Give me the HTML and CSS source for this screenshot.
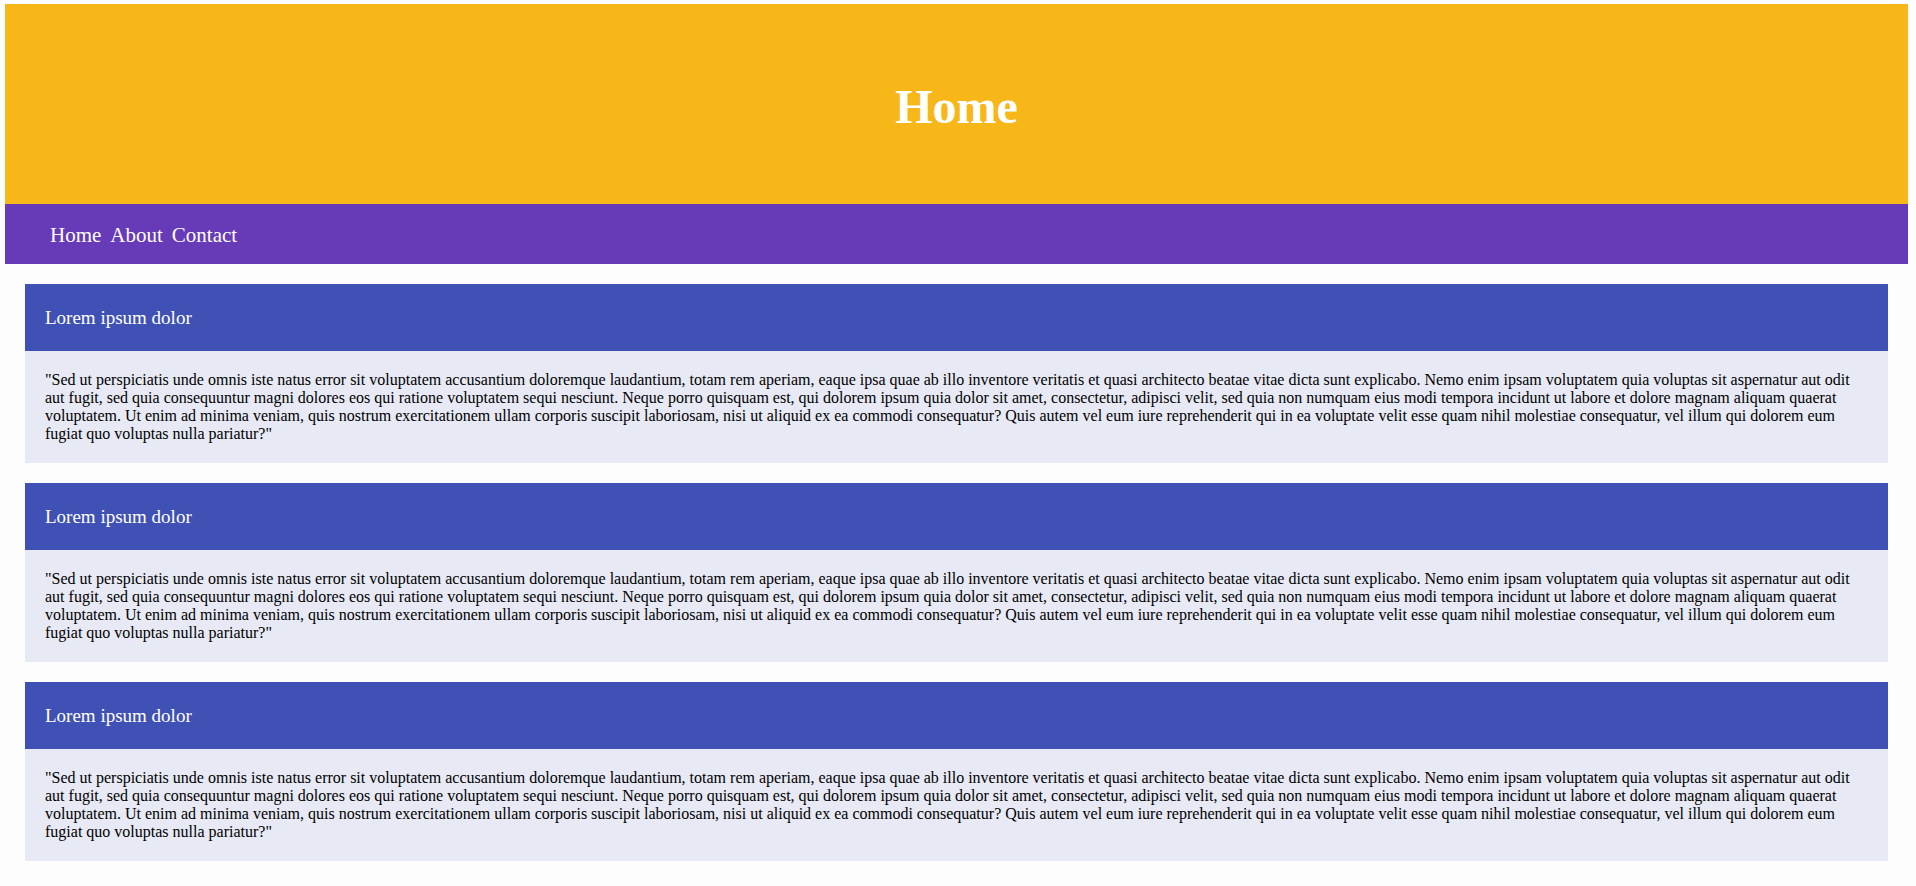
FILE: index.html
```html
<!DOCTYPE html>
<html lang="en">
<head>
<meta charset="utf-8">
<title>Home</title>
<link rel="stylesheet" href="styles.css">
</head>
<body>
<header class="hero">
  <h1 class="hero-title">Home</h1>
</header>
<nav class="nav">
  <a class="nav-link" href="#">Home</a>
  <a class="nav-link" href="#">About</a>
  <a class="nav-link" href="#">Contact</a>
</nav>
<main class="content">
  <section class="card">
    <h3 class="card-title">Lorem ipsum dolor</h3>
    <p class="card-body">"Sed ut perspiciatis unde omnis iste natus error sit voluptatem accusantium doloremque laudantium, totam rem aperiam, eaque ipsa quae ab illo inventore veritatis et quasi architecto beatae vitae dicta sunt explicabo. Nemo enim ipsam voluptatem quia voluptas sit aspernatur aut odit aut fugit, sed quia consequuntur magni dolores eos qui ratione voluptatem sequi nesciunt. Neque porro quisquam est, qui dolorem ipsum quia dolor sit amet, consectetur, adipisci velit, sed quia non numquam eius modi tempora incidunt ut labore et dolore magnam aliquam quaerat voluptatem. Ut enim ad minima veniam, quis nostrum exercitationem ullam corporis suscipit laboriosam, nisi ut aliquid ex ea commodi consequatur? Quis autem vel eum iure reprehenderit qui in ea voluptate velit esse quam nihil molestiae consequatur, vel illum qui dolorem eum fugiat quo voluptas nulla pariatur?"</p>
  </section>
  <section class="card">
    <h3 class="card-title">Lorem ipsum dolor</h3>
    <p class="card-body">"Sed ut perspiciatis unde omnis iste natus error sit voluptatem accusantium doloremque laudantium, totam rem aperiam, eaque ipsa quae ab illo inventore veritatis et quasi architecto beatae vitae dicta sunt explicabo. Nemo enim ipsam voluptatem quia voluptas sit aspernatur aut odit aut fugit, sed quia consequuntur magni dolores eos qui ratione voluptatem sequi nesciunt. Neque porro quisquam est, qui dolorem ipsum quia dolor sit amet, consectetur, adipisci velit, sed quia non numquam eius modi tempora incidunt ut labore et dolore magnam aliquam quaerat voluptatem. Ut enim ad minima veniam, quis nostrum exercitationem ullam corporis suscipit laboriosam, nisi ut aliquid ex ea commodi consequatur? Quis autem vel eum iure reprehenderit qui in ea voluptate velit esse quam nihil molestiae consequatur, vel illum qui dolorem eum fugiat quo voluptas nulla pariatur?"</p>
  </section>
  <section class="card">
    <h3 class="card-title">Lorem ipsum dolor</h3>
    <p class="card-body">"Sed ut perspiciatis unde omnis iste natus error sit voluptatem accusantium doloremque laudantium, totam rem aperiam, eaque ipsa quae ab illo inventore veritatis et quasi architecto beatae vitae dicta sunt explicabo. Nemo enim ipsam voluptatem quia voluptas sit aspernatur aut odit aut fugit, sed quia consequuntur magni dolores eos qui ratione voluptatem sequi nesciunt. Neque porro quisquam est, qui dolorem ipsum quia dolor sit amet, consectetur, adipisci velit, sed quia non numquam eius modi tempora incidunt ut labore et dolore magnam aliquam quaerat voluptatem. Ut enim ad minima veniam, quis nostrum exercitationem ullam corporis suscipit laboriosam, nisi ut aliquid ex ea commodi consequatur? Quis autem vel eum iure reprehenderit qui in ea voluptate velit esse quam nihil molestiae consequatur, vel illum qui dolorem eum fugiat quo voluptas nulla pariatur?"</p>
  </section>
</main>
</body>
</html>
```

FILE: styles.css
```css
html {
  background: #fdfdfd;
}

body {
  margin: 4px 8px 0 5px;
  font-family: "Liberation Serif", "Times New Roman", serif;
  color: #000;
  background: #fdfdfd;
}

.hero {
  height: 200px;
  background: #f7b718;
  display: flex;
  align-items: center;
  justify-content: center;
}

.hero-title {
  margin: 0;
  padding-top: 5px;
  font-size: 48px;
  font-weight: bold;
  color: #fff;
}

.nav {
  height: 60px;
  background: #673ab7;
  display: flex;
  align-items: center;
  gap: 9px;
  padding: 2px 0 0 45px;
  box-sizing: border-box;
}

.nav-link {
  color: #fff;
  text-decoration: none;
  font-size: 21px;
}

.content {
  padding: 20px;
  display: flex;
  flex-direction: column;
  gap: 20px;
}

.card {
  display: flex;
  flex-direction: column;
}

.card-title {
  margin: 0;
  height: 67px;
  box-sizing: border-box;
  padding: 0 20px;
  display: flex;
  align-items: center;
  background: #3f51b5;
  color: #fff;
  font-size: 19px;
  font-weight: normal;
}

.card-body {
  margin: 0;
  padding: 20px;
  background: #e7e9f5;
  font-size: 16px;
  line-height: 18px;
}
```
